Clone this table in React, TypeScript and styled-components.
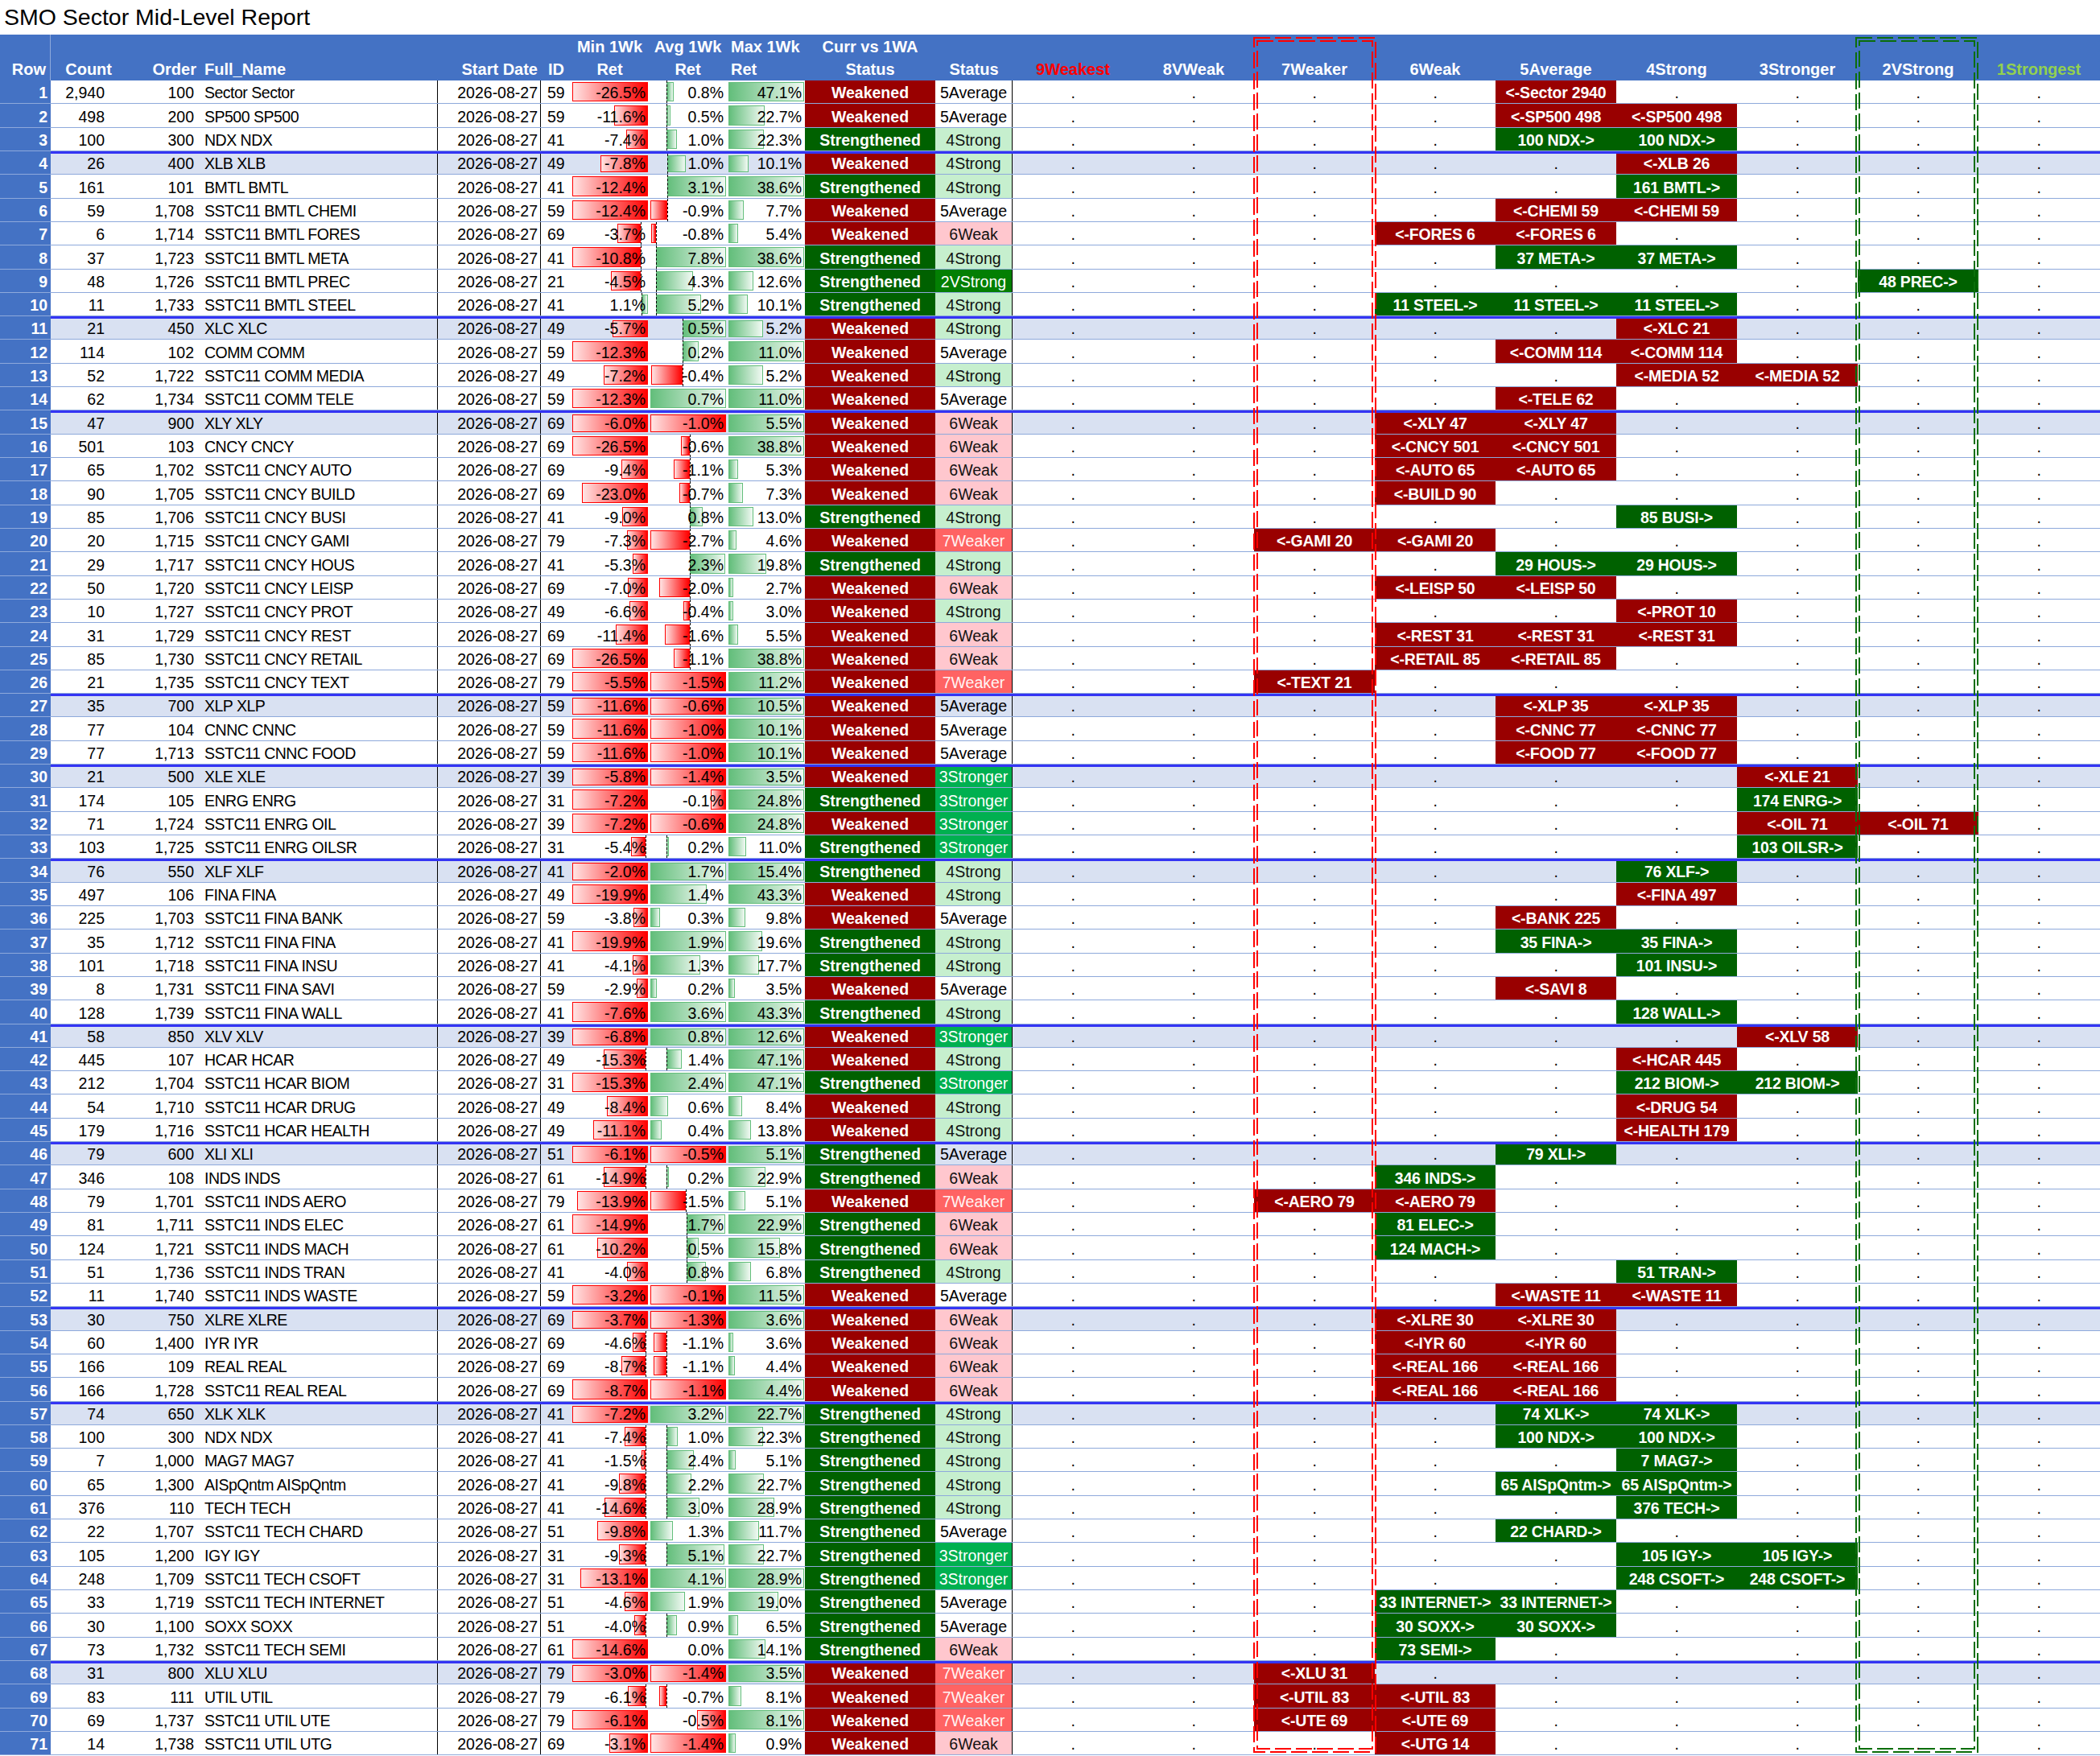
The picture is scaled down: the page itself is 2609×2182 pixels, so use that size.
import React from "react"
import styled, { createGlobalStyle, css } from "styled-components"

// count|order|name|id|min|avg|max|dir|status|buckets|minBar(axis,len)|avgBar(axis,len)|maxLen
const RAW = [
	"2,940|100|Sector Sector|59|-26.5%|0.8%|47.1%|W|5Average|4|94,-94|20,9|94",
	"498|200|SP500 SP500|59|-11.6%|0.5%|22.7%|W|5Average|45|94,-42|20,5|45",
	"100|300|NDX NDX|41|-7.4%|1.0%|22.3%|S|4Strong|45|94,-27|20,13|44",
	"26|400|XLB XLB|49|-7.8%|1.0%|10.1%|W|4Strong|5|94,-59|21,23|25",
	"161|101|BMTL BMTL|41|-12.4%|3.1%|38.6%|S|4Strong|5|94,-94|21,73|94",
	"59|1,708|SSTC11 BMTL CHEMI|59|-12.4%|-0.9%|7.7%|W|5Average|45|94,-94|21,-21|19",
	"6|1,714|SSTC11 BMTL FORES|69|-3.7%|-0.8%|5.4%|W|6Weak|34|85,-29|7,-6|12",
	"37|1,723|SSTC11 BMTL META|41|-10.8%|7.8%|38.6%|S|4Strong|45|85,-85|7,87|94",
	"48|1,726|SSTC11 BMTL PREC|21|-4.5%|4.3%|12.6%|S|2VStrong|7|85,-37|7,46|31",
	"11|1,733|SSTC11 BMTL STEEL|41|1.1%|5.2%|10.1%|S|4Strong|345|86,8|7,56|24",
	"21|450|XLC XLC|49|-5.7%|0.5%|5.2%|W|4Strong|5|94,-44|40,54|43",
	"114|102|COMM COMM|59|-12.3%|0.2%|11.0%|W|5Average|45|94,-94|40,20|94",
	"52|1,722|SSTC11 COMM MEDIA|49|-7.2%|-0.4%|5.2%|W|4Strong|56|94,-55|40,-39|43",
	"62|1,734|SSTC11 COMM TELE|59|-12.3%|0.7%|11.0%|W|5Average|4|94,-94|0,94|94",
	"47|900|XLY XLY|69|-6.0%|-1.0%|5.5%|W|6Weak|34|94,-94|94,-94|94",
	"501|103|CNCY CNCY|69|-26.5%|-0.6%|38.8%|W|6Weak|34|94,-94|49,-11|94",
	"65|1,702|SSTC11 CNCY AUTO|69|-9.4%|-1.1%|5.3%|W|6Weak|34|94,-33|49,-20|12",
	"90|1,705|SSTC11 CNCY BUILD|69|-23.0%|-0.7%|7.3%|W|6Weak|3|94,-82|49,-13|18",
	"85|1,706|SSTC11 CNCY BUSI|41|-9.0%|0.8%|13.0%|S|4Strong|5|94,-32|49,16|31",
	"20|1,715|SSTC11 CNCY GAMI|79|-7.3%|-2.7%|4.6%|W|7Weaker|23|94,-26|49,-49|10",
	"29|1,717|SSTC11 CNCY HOUS|41|-5.3%|2.3%|19.8%|S|4Strong|45|94,-19|49,44|47",
	"50|1,720|SSTC11 CNCY LEISP|69|-7.0%|-2.0%|2.7%|W|6Weak|34|94,-25|49,-38|6",
	"10|1,727|SSTC11 CNCY PROT|49|-6.6%|-0.4%|3.0%|W|4Strong|5|94,-23|49,-8|6",
	"31|1,729|SSTC11 CNCY REST|69|-11.4%|-1.6%|5.5%|W|6Weak|345|94,-40|49,-31|12",
	"85|1,730|SSTC11 CNCY RETAIL|69|-26.5%|-1.1%|38.8%|W|6Weak|34|94,-94|49,-20|94",
	"21|1,735|SSTC11 CNCY TEXT|79|-5.5%|-1.5%|11.2%|W|7Weaker|2|94,-94|94,-94|94",
	"35|700|XLP XLP|59|-11.6%|-0.6%|10.5%|W|5Average|45|94,-94|94,-94|94",
	"77|104|CNNC CNNC|59|-11.6%|-1.0%|10.1%|W|5Average|45|94,-94|94,-94|94",
	"77|1,713|SSTC11 CNNC FOOD|59|-11.6%|-1.0%|10.1%|W|5Average|45|94,-94|94,-94|94",
	"21|500|XLE XLE|39|-5.8%|-1.4%|3.5%|W|3Stronger|6|94,-94|94,-94|94",
	"174|105|ENRG ENRG|31|-7.2%|-0.1%|24.8%|S|3Stronger|6|94,-94|94,-19|94",
	"71|1,724|SSTC11 ENRG OIL|39|-7.2%|-0.6%|24.8%|W|3Stronger|67|94,-94|94,-94|94",
	"103|1,725|SSTC11 ENRG OILSR|31|-5.4%|0.2%|11.0%|S|3Stronger|6|91,-18|20,3|22",
	"76|550|XLF XLF|41|-2.0%|1.7%|15.4%|S|4Strong|5|94,-94|0,94|94",
	"497|106|FINA FINA|49|-19.9%|1.4%|43.3%|W|4Strong|5|94,-94|0,70|94",
	"225|1,703|SSTC11 FINA BANK|59|-3.8%|0.3%|9.8%|W|5Average|4|94,-18|0,12|21",
	"35|1,712|SSTC11 FINA FINA|41|-19.9%|1.9%|19.6%|S|4Strong|45|94,-94|0,94|42",
	"101|1,718|SSTC11 FINA INSU|41|-4.1%|1.3%|17.7%|S|4Strong|5|94,-19|0,62|38",
	"8|1,731|SSTC11 FINA SAVI|59|-2.9%|0.2%|3.5%|W|5Average|4|94,-14|0,8|8",
	"128|1,739|SSTC11 FINA WALL|41|-7.6%|3.6%|43.3%|S|4Strong|5|94,-94|0,94|94",
	"58|850|XLV XLV|39|-6.8%|0.8%|12.6%|W|3Stronger|6|94,-94|0,94|94",
	"445|107|HCAR HCAR|49|-15.3%|1.4%|47.1%|W|4Strong|5|91,-52|20,19|94",
	"212|1,704|SSTC11 HCAR BIOM|31|-15.3%|2.4%|47.1%|S|3Stronger|56|94,-94|0,94|94",
	"54|1,710|SSTC11 HCAR DRUG|49|-8.4%|0.6%|8.4%|W|4Strong|5|94,-51|0,22|17",
	"179|1,716|SSTC11 HCAR HEALTH|49|-11.1%|0.4%|13.8%|W|4Strong|5|94,-68|0,14|28",
	"79|600|XLI XLI|51|-6.1%|-0.5%|5.1%|S|5Average|4|94,-94|94,-94|94",
	"346|108|INDS INDS|61|-14.9%|0.2%|22.9%|S|6Weak|3|91,-52|20,3|46",
	"79|1,701|SSTC11 INDS AERO|79|-13.9%|-1.5%|5.1%|W|7Weaker|23|94,-88|44,-44|21",
	"81|1,711|SSTC11 INDS ELEC|61|-14.9%|1.7%|22.9%|S|6Weak|3|94,-94|45,48|94",
	"124|1,721|SSTC11 INDS MACH|61|-10.2%|0.5%|15.8%|S|6Weak|3|94,-63|45,15|64",
	"51|1,736|SSTC11 INDS TRAN|41|-4.0%|0.8%|6.8%|S|4Strong|5|94,-26|45,24|28",
	"11|1,740|SSTC11 INDS WASTE|59|-3.2%|-0.1%|11.5%|W|5Average|45|94,-94|94,-94|94",
	"30|750|XLRE XLRE|69|-3.7%|-1.3%|3.6%|W|6Weak|34|94,-94|94,-94|94",
	"60|1,400|IYR IYR|69|-4.6%|-1.1%|3.6%|W|6Weak|34|91,-16|20,-16|6",
	"166|109|REAL REAL|69|-8.7%|-1.1%|4.4%|W|6Weak|34|91,-30|20,-16|8",
	"166|1,728|SSTC11 REAL REAL|69|-8.7%|-1.1%|4.4%|W|6Weak|34|94,-94|94,-94|94",
	"74|650|XLK XLK|41|-7.2%|3.2%|22.7%|S|4Strong|45|94,-94|0,94|94",
	"100|300|NDX NDX|41|-7.4%|1.0%|22.3%|S|4Strong|45|91,-26|20,14|43",
	"7|1,000|MAG7 MAG7|41|-1.5%|2.4%|5.1%|S|4Strong|5|91,-5|20,34|9",
	"65|1,300|AISpQntm AISpQntm|41|-9.8%|2.2%|22.7%|S|4Strong|45|91,-33|20,31|44",
	"376|110|TECH TECH|41|-14.6%|3.0%|28.9%|S|4Strong|5|91,-51|20,41|57",
	"22|1,707|SSTC11 TECH CHARD|51|-9.8%|1.3%|11.7%|S|5Average|4|94,-63|0,28|38",
	"105|1,200|IGY IGY|31|-9.3%|5.1%|22.7%|S|3Stronger|56|91,-33|20,72|44",
	"248|1,709|SSTC11 TECH CSOFT|31|-13.1%|4.1%|28.9%|S|3Stronger|56|94,-84|0,94|94",
	"33|1,719|SSTC11 TECH INTERNET|51|-4.6%|1.9%|19.0%|S|5Average|34|94,-29|0,43|62",
	"30|1,100|SOXX SOXX|51|-4.0%|0.9%|6.5%|S|5Average|34|91,-14|20,13|12",
	"73|1,732|SSTC11 TECH SEMI|61|-14.6%|0.0%|14.1%|S|6Weak|3|94,-94|0,0|46",
	"31|800|XLU XLU|79|-3.0%|-1.4%|3.5%|W|7Weaker|2|94,-94|94,-94|94",
	"83|111|UTIL UTIL|79|-6.1%|-0.7%|8.1%|W|7Weaker|23|91,-22|20,-9|16",
	"69|1,737|SSTC11 UTIL UTE|79|-6.1%|-0.5%|8.1%|W|7Weaker|23|94,-94|94,-36|94",
	"14|1,738|SSTC11 UTIL UTG|69|-3.1%|-1.4%|0.9%|W|6Weak|3|94,-48|94,-94|9",
]

const GROUP_STARTS = [4, 11, 15, 27, 30, 34, 41, 46, 53, 57, 68]

const BUCKETS = ["9Weakest", "8VWeak", "7Weaker", "6Weak", "5Average", "4Strong", "3Stronger", "2VStrong", "1Strongest"]

const BODY_COLS = "77px 110px 293px 129px 37px 97px 97px 97px 162px 96px repeat(9, 150px)"

type Row = {
	n: number
	count: string
	order: string
	name: string
	id: string
	min: string
	avg: string
	max: string
	up: boolean
	status: string
	buckets: number[]
	minBar: number[]
	avgBar: number[]
	maxLen: number
}

const rows: Row[] = RAW.map((line, i) => {
	const p = line.split("|")
	return {
		n: i + 1,
		count: p[0],
		order: p[1],
		name: p[2],
		id: p[3],
		min: p[4],
		avg: p[5],
		max: p[6],
		up: p[7] === "S",
		status: p[8],
		buckets: p[9].split("").map(Number),
		minBar: p[10].split(",").map(Number),
		avgBar: p[11].split(",").map(Number),
		maxLen: Number(p[12]),
	}
})

const bucketLabel = (r: Row) => {
	const short = r.name.split(" ").pop()
	const cnt = r.count.replace(",", "")
	return r.up ? `${cnt} ${short}->` : `<-${short} ${cnt}`
}

const GlobalStyle = createGlobalStyle`
	html, body {
		margin: 0;
		padding: 0;
		background: #fff;
	}
	body {
		font-family: "Liberation Sans", Arial, sans-serif;
		color: #000;
	}
	* {
		box-sizing: border-box;
	}
`

const Page = styled.div`
	position: relative;
	width: 2609px;
`

const Title = styled.div`
	height: 43px;
	line-height: 43px;
	font-size: 28.5px;
	padding-left: 5px;
	white-space: nowrap;
`

const HeaderRow = styled.div`
	display: grid;
	grid-template-columns: 63px ${BODY_COLS};
	height: 57px;
	background: #4472c4;
	font-weight: bold;
	font-size: 20px;
`

const HeaderCell = styled.div<{ $align: string; $color?: string; $pl?: number; $pr?: number }>`
	display: flex;
	flex-direction: column;
	justify-content: flex-end;
	text-align: ${p => p.$align};
	color: ${p => p.$color || "#fff"};
	padding: 0 ${p => p.$pr || 0}px 0 ${p => p.$pl || 0}px;
	white-space: nowrap;

	&:first-child {
		border-right: 1px solid #8ea9db;
	}
`

const HeaderLine = styled.div`
	height: 28px;
	line-height: 28px;
`

const DataRow = styled.div`
	display: grid;
	grid-template-columns: 63px 1fr;
	height: 29.32px;
	border-bottom: 1px solid #8ea9db;
	font-size: 19.5px;
`

const RowNum = styled.div`
	display: flex;
	align-items: flex-end;
	justify-content: flex-end;
	padding: 0 4px 2px 0;
	line-height: 22px;
	background: #4472c4;
	color: #fff;
	font-weight: bold;
`

const RowBody = styled.div<{ $groupStart: boolean; $shaded: boolean }>`
	display: grid;
	grid-template-columns: ${BODY_COLS};
	background: ${p => (p.$shaded ? "#d9e1f2" : "#fff")};
	border-top: ${p => (p.$groupStart ? "3px solid #3434f4" : "0")};
`

const cellBase = css`
	display: flex;
	align-items: flex-end;
	padding-bottom: 2px;
	line-height: 22px;
	white-space: nowrap;
	overflow: hidden;
`

const TextCell = styled.div<{ $align: "flex-start" | "flex-end" | "center"; $pl?: number; $pr?: number }>`
	${cellBase};
	justify-content: ${p => p.$align};
	padding-left: ${p => p.$pl || 0}px;
	padding-right: ${p => p.$pr || 0}px;
`

const NameCell = styled.div`
	${cellBase};
	padding-left: 4px;
	letter-spacing: -0.5px;
`

const DateCell = styled.div`
	${cellBase};
	justify-content: flex-end;
	padding-right: 3px;
	border-left: 1px solid #000;
	border-right: 1px solid #000;
`

const BarCell = styled.div`
	${cellBase};
	position: relative;
	justify-content: flex-end;
	padding-right: 4px;
`

const BarFill = styled.div<{ $neg: boolean }>`
	position: absolute;
	top: 2px;
	bottom: 2px;
	border: 1px solid ${p => (p.$neg ? "#ff0000" : "#63be7b")};
	background: ${p =>
		p.$neg
			? "linear-gradient(to left, #ff0000, #ffe4e4)"
			: "linear-gradient(to right, #63be7b, #f1f9f3)"};
`

const BarAxis = styled.div`
	position: absolute;
	top: 0;
	bottom: 0;
	width: 0;
	border-left: 1px dashed #000;
`

const BarText = styled.span`
	position: relative;
`

const CurrCell = styled.div<{ $up: boolean }>`
	${cellBase};
	justify-content: center;
	background: ${p => (p.$up ? "#006100" : "#990000")};
	color: #fff;
	font-weight: bold;
`

const STATUS_TONES: Record<string, { bg: string; fg: string }> = {
	"5Average": { bg: "transparent", fg: "#000" },
	"4Strong": { bg: "#c6efce", fg: "#111" },
	"6Weak": { bg: "#ffc7ce", fg: "#111" },
	"7Weaker": { bg: "#ff6363", fg: "#fff4f4" },
	"3Stronger": { bg: "#00b050", fg: "#fff" },
	"2VStrong": { bg: "#037f03", fg: "#fff" },
}

const StatusCell = styled.div<{ $tone: string }>`
	${cellBase};
	justify-content: center;
	background: ${p => STATUS_TONES[p.$tone].bg};
	color: ${p => STATUS_TONES[p.$tone].fg};
	border-right: 1px solid #000;
`

const BucketCell = styled.div<{ $kind: "dot" | "up" | "down" }>`
	${cellBase};
	justify-content: center;
	letter-spacing: -0.2px;
	${p =>
		p.$kind === "dot"
			? css`
					color: #000;
				`
			: css`
					background: ${p.$kind === "up" ? "#006100" : "#990000"};
					color: #fff;
					font-weight: bold;
				`}
`

const DashedFrame = styled.svg<{ $left: number }>`
	position: absolute;
	top: 46px;
	left: ${p => p.$left}px;
	overflow: visible;
	pointer-events: none;
`

const DataBar = ({ text, axis, len }: { text: string; axis: number; len: number }) => {
	const neg = len < 0
	const left = 2 + (neg ? axis + len : axis)
	const width = Math.abs(len)
	return (
		<BarCell>
			{width > 0 && <BarFill $neg={neg} style={{ left, width }} />}
			{axis > 0 && axis < 94 && <BarAxis style={{ left: 2 + axis }} />}
			<BarText>{text}</BarText>
		</BarCell>
	)
}

const Frame = ({ left, color }: { left: number; color: string }) => {
	const w = 153
	const h = 2132
	return (
		<DashedFrame $left={left} width={w} height={h}>
			<rect x={1} y={1} width={w - 2} height={h - 2} fill="none" stroke={color} strokeWidth={2} strokeDasharray="20 6" />
			<rect x={5} y={5} width={w - 10} height={h - 10} fill="none" stroke={color} strokeWidth={2} strokeDasharray="20 6" />
		</DashedFrame>
	)
}

const Header = () => (
	<HeaderRow>
		<HeaderCell $align="right" $pr={5}><HeaderLine>Row</HeaderLine></HeaderCell>
		<HeaderCell $align="right" $pr={1}><HeaderLine>Count</HeaderLine></HeaderCell>
		<HeaderCell $align="right" $pr={6}><HeaderLine>Order</HeaderLine></HeaderCell>
		<HeaderCell $align="left" $pl={4}><HeaderLine>Full_Name</HeaderLine></HeaderCell>
		<HeaderCell $align="right" $pr={4}><HeaderLine>Start Date</HeaderLine></HeaderCell>
		<HeaderCell $align="left" $pl={9}><HeaderLine>ID</HeaderLine></HeaderCell>
		<HeaderCell $align="center">
			<HeaderLine>Min 1Wk</HeaderLine>
			<HeaderLine>Ret</HeaderLine>
		</HeaderCell>
		<HeaderCell $align="center">
			<HeaderLine>Avg 1Wk</HeaderLine>
			<HeaderLine>Ret</HeaderLine>
		</HeaderCell>
		<HeaderCell $align="left" $pl={5}>
			<HeaderLine>Max 1Wk</HeaderLine>
			<HeaderLine>Ret</HeaderLine>
		</HeaderCell>
		<HeaderCell $align="center">
			<HeaderLine>Curr vs 1WA</HeaderLine>
			<HeaderLine>Status</HeaderLine>
		</HeaderCell>
		<HeaderCell $align="center"><HeaderLine>Status</HeaderLine></HeaderCell>
		{BUCKETS.map(b => (
			<HeaderCell
				key={b}
				$align="center"
				$color={b === "9Weakest" ? "#ff0000" : b === "1Strongest" ? "#92d050" : undefined}
			>
				<HeaderLine>{b}</HeaderLine>
			</HeaderCell>
		))}
	</HeaderRow>
)

const ReportRow = ({ r }: { r: Row }) => {
	const groupStart = GROUP_STARTS.includes(r.n)
	const label = bucketLabel(r)
	return (
		<DataRow>
			<RowNum>{r.n}</RowNum>
			<RowBody $groupStart={groupStart} $shaded={groupStart}>
				<TextCell $align="flex-end" $pr={10}>{r.count}</TextCell>
				<TextCell $align="flex-end" $pr={9}>{r.order}</TextCell>
				<NameCell>{r.name}</NameCell>
				<DateCell>2026-08-27</DateCell>
				<TextCell $align="flex-start" $pl={8}>{r.id}</TextCell>
				<DataBar text={r.min} axis={r.minBar[0]} len={r.minBar[1]} />
				<DataBar text={r.avg} axis={r.avgBar[0]} len={r.avgBar[1]} />
				<DataBar text={r.max} axis={0} len={r.maxLen} />
				<CurrCell $up={r.up}>{r.up ? "Strengthened" : "Weakened"}</CurrCell>
				<StatusCell $tone={r.status}>{r.status}</StatusCell>
				{BUCKETS.map((b, i) =>
					r.buckets.includes(i) ? (
						<BucketCell key={b} $kind={r.up ? "up" : "down"}>{label}</BucketCell>
					) : (
						<BucketCell key={b} $kind="dot">.</BucketCell>
					)
				)}
			</RowBody>
		</DataRow>
	)
}

const App = () => (
	<>
		<GlobalStyle />
		<Page>
			<Title>SMO Sector Mid-Level Report</Title>
			<Header />
			{rows.map(r => (
				<ReportRow key={r.n} r={r} />
			))}
			<Frame left={1557} color="#ff0000" />
			<Frame left={2305} color="#0b6e0b" />
		</Page>
	</>
)

export default App
